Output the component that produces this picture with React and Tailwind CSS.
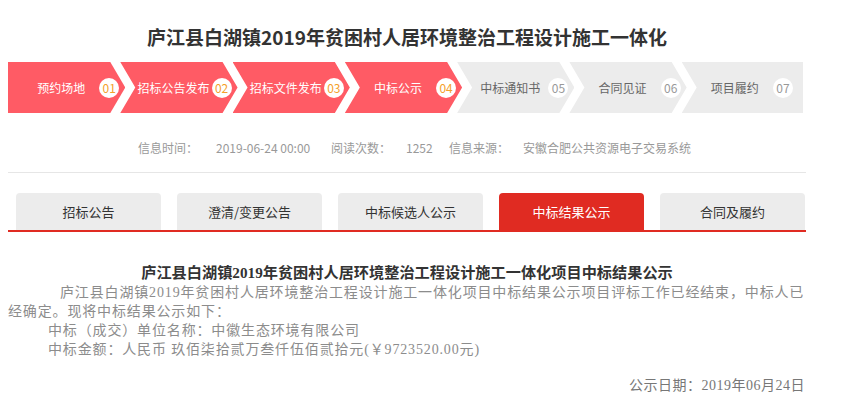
import React from "react";

const steps = [
  { t: "预约场地", n: "01", on: true },
  { t: "招标公告发布", n: "02", on: true },
  { t: "招标文件发布", n: "03", on: true },
  { t: "中标公示", n: "04", on: true },
  { t: "中标通知书", n: "05", on: false },
  { t: "合同见证", n: "06", on: false },
  { t: "项目履约", n: "07", on: false },
];

const tabs = ["招标公告", "澄清/变更公告", "中标候选人公示", "中标结果公示", "合同及履约"];

const sans = "font-['Microsoft_YaHei','Noto_Sans_CJK_SC',sans-serif]";
const serif = "font-['Liberation_Serif','Noto_Sans_CJK_SC',serif]";

function Step({ s, i }) {
  const first = i === 0;
  const last = i === steps.length - 1;
  const clip = first
    ? "[clip-path:polygon(0_0,calc(100%_-_15px)_0,100%_50%,calc(100%_-_15px)_100%,0_100%)]"
    : last
    ? "[clip-path:polygon(0_0,100%_0,100%_100%,0_100%,15px_50%)]"
    : "[clip-path:polygon(0_0,calc(100%_-_15px)_0,100%_50%,calc(100%_-_15px)_100%,0_100%,15px_50%)]";
  return (
    <div
      className={`flex-1 h-full flex items-center pl-[15px] ${last ? "pr-[10px]" : "pr-[6px]"} ${
        first ? "" : "-ml-[5px]"
      } ${clip} ${s.on ? "bg-[#ff5b65] text-white" : "bg-[#ececec] text-[#666]"}`}
    >
      <span className="flex-1 text-center text-[12px] whitespace-nowrap">{s.t}</span>
      <span
        className={`w-5 h-5 rounded-full bg-white flex items-center justify-center text-[12px] leading-none ${
          s.on ? "text-[#f5a02a]" : "text-[#999]"
        }`}
      >
        {s.n}
      </span>
    </div>
  );
}

export default function App() {
  return (
    <div className={`w-[846px] h-[416px] bg-white overflow-hidden ${sans}`}>
      <div className="ml-[8px] w-[798px]">
        <h1 className="pt-[26px] leading-[22px] text-[19px] font-bold text-[#333] text-center">
          庐江县白湖镇2019年贫困村人居环境整治工程设计施工一体化
        </h1>

        <div className="mt-[14px] w-[795px] h-[51px] flex">
          {steps.map((s, i) => (
            <Step key={i} s={s} i={i} />
          ))}
        </div>

        <div className="mt-[25px] flex leading-[20px] text-[12px] text-[#999] whitespace-nowrap">
          <span className="ml-[130px] w-[78px]">信息时间：</span>
          <span className="w-[115px]">2019-06-24 00:00</span>
          <span className="w-[75px]">阅读次数：</span>
          <span className="w-[43px]">1252</span>
          <span className="w-[74px]">信息来源：</span>
          <span>安徽合肥公共资源电子交易系统</span>
        </div>

        <div className="mt-[14px] h-px bg-[#e6e6e6]" />

        <div className="mt-[20px] border-b-2 border-[#e02b22]">
          <div className="flex gap-[16px] pl-[8px]">
            {tabs.map((t, i) => (
              <div
                key={i}
                className={`w-[145px] h-[37px] rounded-t-[4px] flex items-center justify-center text-[13px] ${
                  i === 3 ? "bg-[#e02b22] text-white" : "bg-[#ececec] text-[#333]"
                }`}
              >
                {t}
              </div>
            ))}
          </div>
        </div>

        <div className={`${serif}`}>
          <h2 className="mt-[30px] leading-[21px] text-[15.2px] font-bold text-[#333] text-center whitespace-nowrap">
            庐江县白湖镇2019年贫困村人居环境整治工程设计施工一体化项目中标结果公示
          </h2>
          <div className="text-[14px] leading-[19px] tracking-[0.85px] text-[#8c8c8c] whitespace-nowrap">
            <p className="pl-[52px]">
              庐江县白湖镇2019年贫困村人居环境整治工程设计施工一体化项目中标结果公示项目评标工作已经结束，中标人已
            </p>
            <p>经确定。现将中标结果公示如下：</p>
            <p className="pl-[40px]">中标（成交）单位名称：中徽生态环境有限公司</p>
            <p className="pl-[40px]">中标金额：人民币 玖佰柒拾贰万叁仟伍佰贰拾元(￥9723520.00元)</p>
          </div>
          <p className="mt-[17px] text-right text-[14px] leading-[19px] tracking-[0.5px] text-[#777] whitespace-nowrap pr-[1px]">
            公示日期：2019年06月24日
          </p>
        </div>
      </div>
    </div>
  );
}
